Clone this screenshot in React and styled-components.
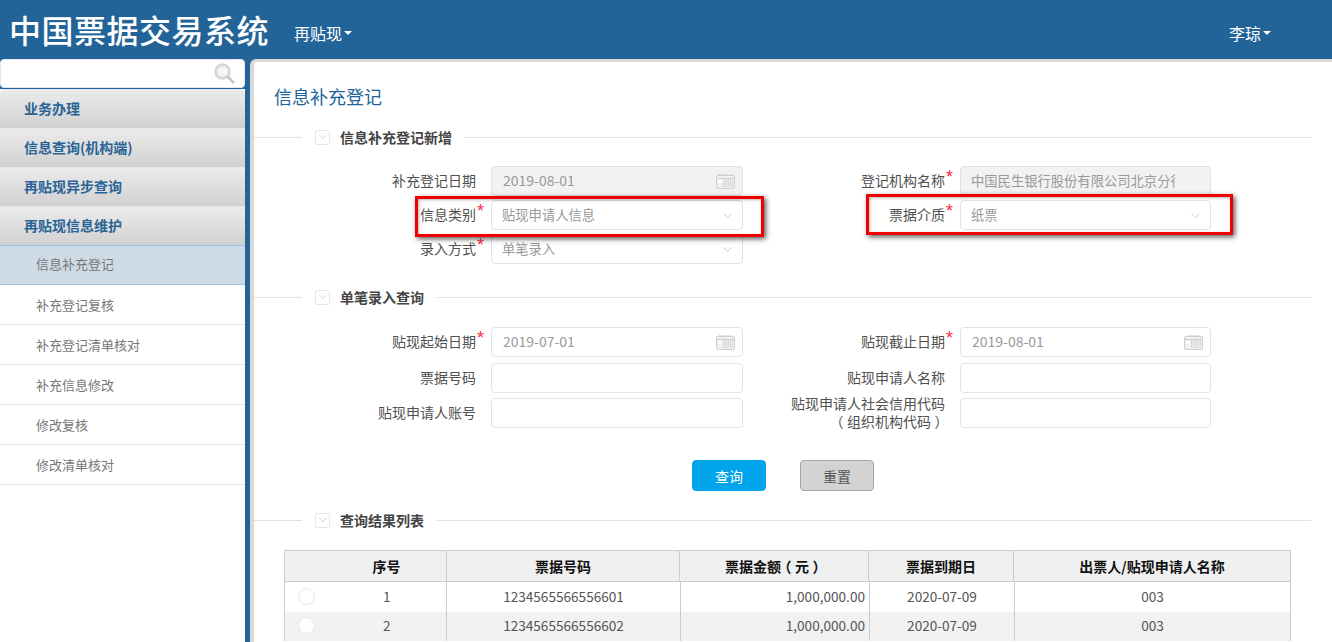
import React from "react";
import styled, { createGlobalStyle } from "styled-components";
import { ChevronDown } from "lucide-react";

const GlobalStyle = createGlobalStyle`
  html, body {
    margin: 0;
    padding: 0;
    height: 100%;
    overflow: hidden;
    background: #ffffff;
  }
  * {
    box-sizing: border-box;
  }
  #root {
    height: 642px;
    font-family: "Noto Sans CJK SC", sans-serif;
  }
`;

const cjk = `"Noto Sans CJK SC", sans-serif`;

// Page frame
const Page = styled.div`
  height: 642px;
  overflow: hidden;
  background: #226498;
  display: flex;
  flex-direction: column;
`;

const Header = styled.header`
  height: 59px;
  flex: none;
  display: flex;
  align-items: center;
  padding: 0 61px 0 9px;
  color: #ffffff;
`;

const Title = styled.h1`
  margin: 0 25px 0 0;
  font-family: ${cjk};
  font-size: 32px;
  font-weight: 500;
  letter-spacing: 0.5px;
  line-height: 59px;
`;

const NavMenu = styled.div`
  font-family: ${cjk};
  font-size: 16px;
  display: flex;
  align-items: center;
  margin: ${(p) => (p.$right ? "0 0 0 auto" : "0")};
  padding-top: 6px;
`;

const Caret = styled.span`
  width: 0;
  height: 0;
  margin-left: 2px;
  border-left: 4px solid transparent;
  border-right: 4px solid transparent;
  border-top: 4px solid #ffffff;
`;

const Body = styled.div`
  flex: 1;
  min-height: 0;
  display: flex;
`;

// Sidebar
const Sidebar = styled.aside`
  width: 245px;
  flex: none;
  margin-right: 5px;
  background: #ffffff;
  display: flex;
  flex-direction: column;
`;

const SearchBox = styled.div`
  height: 30px;
  background: #226498;
  flex: none;
`;

const SearchInner = styled.div`
  height: 29px;
  background: #ffffff;
  border: 1px solid #e3e8f0;
  border-radius: 4px;
  display: flex;
  align-items: center;
  justify-content: flex-end;
  padding-right: 9px;
`;

const GroupItem = styled.div`
  height: 39px;
  flex: none;
  display: flex;
  align-items: center;
  padding: 0 0 2px 24px;
  font-family: ${cjk};
  font-size: 14px;
  font-weight: 700;
  color: #2a6496;
  background: linear-gradient(#ebebeb, #d1d1d1);
  border-top: 1px solid #e3e8f0;
  border-radius: ${(p) => (p.$first ? "5px 5px 0 0" : "0")};
`;

const SubItem = styled.div`
  height: 40px;
  flex: none;
  display: flex;
  align-items: center;
  padding: 0 0 ${(p) => (p.$active ? "3px" : "0")} 36px;
  font-family: ${cjk};
  font-size: 13px;
  color: #777777;
  background: ${(p) => (p.$active ? "#cddbe7" : "#ffffff")};
  border-bottom: 1px solid ${(p) => (p.$active ? "#a3c0dd" : "#e0e7f0")};
  border-top: ${(p) => (p.$active ? "1px solid #a3c0dd" : "0")};
`;

// Content panel
const Content = styled.main`
  flex: 1;
  position: relative;
  background: #ffffff;
  border-left: 4px solid #d8d8d8;
  border-top: 3px solid #d8d8d8;
  border-top-left-radius: 6px;
  padding-right: 21px;
  min-width: 0;
`;

const PageTitle = styled.h2`
  margin: 0;
  padding: 21px 0 0 20px;
  height: 64px;
  font-family: ${cjk};
  font-size: 18px;
  font-weight: 400;
  line-height: 26px;
  color: #226498;
`;

const Legend = styled.div`
  height: 22px;
  margin-top: ${(p) => p.$top || 0}px;
  display: flex;
  align-items: center;
  font-family: ${cjk};
  font-size: 14px;
  font-weight: 700;
  color: #444444;
  &::before {
    content: "";
    width: 48px;
    height: 1px;
    background: #dde3ea;
    margin-right: 13px;
  }
  &::after {
    content: "";
    flex: 1;
    height: 1px;
    background: #dde3ea;
    margin-left: 12px;
  }
`;

const FoldBox = styled.span`
  width: 15px;
  height: 15px;
  margin-right: 10px;
  border: 1px solid #e3e8f0;
  border-radius: 2px;
  display: flex;
  align-items: center;
  justify-content: center;
  color: #bcc4ce;
`;

const FormGrid = styled.div`
  display: grid;
  grid-template-columns: 237px 252px 217px 251px;
  grid-auto-rows: 30px;
  row-gap: ${(p) => p.$gap}px;
  margin-top: ${(p) => p.$top}px;
`;

const FieldLabel = styled.label`
  position: relative;
  display: flex;
  align-items: center;
  justify-content: flex-end;
  padding: 0 15px 2px 0;
  font-family: ${cjk};
  font-size: 14px;
  line-height: 18px;
  color: #505050;
  text-align: right;
`;

const Required = styled.span`
  position: absolute;
  right: 7px;
  top: 2px;
  font-family: "Liberation Sans", sans-serif;
  font-size: 18px;
  line-height: 18px;
  color: #ff2a3c;
`;

// Fullwidth brackets sit centred in their cell in the reference
const Paren = styled.span`
  font-feature-settings: "halt";
  padding: 0 3.5px;
`;

const Control = styled.div`
  height: 30px;
  display: flex;
  align-items: center;
  justify-content: space-between;
  padding: 0 7px 0 11px;
  border: 1px solid #dde3ea;
  border-radius: 4px;
  background: ${(p) => (p.$disabled ? "#f2f2f2" : "#ffffff")};
  color: #999999;
  overflow: hidden;
  white-space: nowrap;
`;

const ControlText = styled.span`
  font-family: ${cjk};
  font-size: ${(p) => (p.$date ? "14px" : "13.3px")};
  margin: ${(p) => (p.$date ? "0 0 2px" : "0 0 2px -1px")};
  overflow: hidden;
  max-width: ${(p) => (p.$clip ? "204px" : "none")};
`;

const Actions = styled.div`
  display: flex;
  margin: 32px 0 0 438px;
  gap: 34px;
`;

const Button = styled.button`
  width: 74px;
  height: 31px;
  padding: 0;
  border-radius: 4px;
  font-family: ${cjk};
  font-size: 14px;
  cursor: pointer;
  color: ${(p) => (p.$primary ? "#ffffff" : "#555555")};
  background: ${(p) => (p.$primary ? "#00a4ea" : "#d3d3d3")};
  border: 1px solid ${(p) => (p.$primary ? "#00a4ea" : "#a5a5a5")};
`;

const TableWrap = styled.div`
  margin: 19px 0 0 30px;
  width: 1006px;
`;

const GridTable = styled.table`
  width: 100%;
  table-layout: fixed;
  border-collapse: collapse;
  font-size: 13.6px;
`;

const HeadCell = styled.th`
  height: 31px;
  padding: ${(p) => (p.$seq ? "0 0 0 42px" : "0")};
  background: #f0f0f0;
  border: 1px solid #cccccc;
  font-family: ${cjk};
  font-size: 14px;
  font-weight: 700;
  color: #111111;
  text-align: center;
`;

const Cell = styled.td`
  height: 29.5px;
  padding: ${(p) => (p.$right ? "0 4px 1px 0" : "0 0 1px")};
  border-left: 1px solid #cccccc;
  border-right: 1px solid #cccccc;
  text-align: ${(p) => (p.$right ? "right" : "center")};
  color: #555555;
`;

const BodyRow = styled.tr`
  background: ${(p) => (p.$alt ? "#f2f2f2" : "#ffffff")};
  ${(p) => p.$alt && "& > td { padding-bottom: 2px; }"}
`;

const SeqCell = styled.div`
  display: flex;
  align-items: center;
  padding-left: 13px;
`;

const Radio = styled.span`
  width: 17px;
  height: 17px;
  flex: none;
  border-radius: 50%;
  background: #ffffff;
  border: 1px solid #e3e8f0;
`;

const SeqNum = styled.span`
  flex: 1;
  margin-left: 68px;
  margin-right: 56px;
  text-align: center;
`;

const Highlight = styled.div`
  position: absolute;
  left: ${(p) => p.$left}px;
  top: ${(p) => p.$top}px;
  width: ${(p) => p.$width}px;
  height: 41px;
  border: 3px solid #f00000;
  box-shadow: 2px 2px 5px rgba(0, 0, 0, 0.65), inset 1px 1px 3px rgba(0, 0, 0, 0.3);
  pointer-events: none;
`;

const SearchIcon = () => (
  <svg width="21" height="21" viewBox="0 0 21 21" fill="none">
    <circle cx="8.5" cy="8.5" r="7" stroke="#d4d4d4" strokeWidth="2.4" fill="#f7f7f7" />
    <circle cx="8.5" cy="8.5" r="4.6" stroke="#e8e8e8" />
    <path d="M14 14l5.2 5.2" stroke="#c8c8c8" strokeWidth="3" strokeLinecap="round" />
  </svg>
);

const CalendarIcon = () => (
  <svg width="19" height="15" viewBox="0 0 19 15" fill="none">
    <rect x="0.5" y="1.5" width="18" height="13" rx="1.5" fill="#f0f0f0" stroke="#d0d0d0" />
    <path d="M1 4.5h17" stroke="#cfcfcf" />
    <path d="M3 0.5h13" stroke="#cfcfcf" strokeDasharray="1 1" />
    <rect x="2.5" y="6" width="3" height="3" fill="#fff" />
    <path d="M7 6h10M7 8h10M7 10h10M7 12h10" stroke="#c8c8c8" strokeDasharray="1.4 0.8" />
  </svg>
);

const Fold = () => (
  <FoldBox>
    <ChevronDown size={12} strokeWidth={1.5} />
  </FoldBox>
);

const Field = ({ label, required, children }) => (
  <FieldLabel>
    {children || label}
    {required && <Required>*</Required>}
  </FieldLabel>
);

const DateControl = ({ value, disabled }) => (
  <Control $disabled={disabled}>
    <ControlText $date>{value}</ControlText>
    <CalendarIcon />
  </Control>
);

const SelectControl = ({ value }) => (
  <Control>
    <ControlText>{value}</ControlText>
    <ChevronDown size={15} color="#c4c8cc" strokeWidth={1.5} />
  </Control>
);

const groups = ["业务办理", "信息查询(机构端)", "再贴现异步查询", "再贴现信息维护"];
const subItems = ["信息补充登记", "补充登记复核", "补充登记清单核对", "补充信息修改", "修改复核", "修改清单核对"];

const headCols = [162, 233, 189, 145, 277];
const bodyCols = [162, 234, 189, 145, 276];

const rows = [
  { seq: 1, no: "1234565566556601", amount: "1,000,000.00", due: "2020-07-09", name: "003" },
  { seq: 2, no: "1234565566556602", amount: "1,000,000.00", due: "2020-07-09", name: "003" },
];

const App = () => {
  return (
    <Page>
      <GlobalStyle />
      <Header>
        <Title>中国票据交易系统</Title>
        <NavMenu>
          再贴现
          <Caret />
        </NavMenu>
        <NavMenu $right>
          李琼
          <Caret />
        </NavMenu>
      </Header>
      <Body>
        <Sidebar>
          <SearchBox>
            <SearchInner>
              <SearchIcon />
            </SearchInner>
          </SearchBox>
          {groups.map((g, i) => (
            <GroupItem key={g} $first={i === 0}>
              {g}
            </GroupItem>
          ))}
          {subItems.map((s, i) => (
            <SubItem key={s} $active={i === 0}>
              {s}
            </SubItem>
          ))}
        </Sidebar>
        <Content>
          <PageTitle>信息补充登记</PageTitle>
          <Legend>
            <Fold />
            信息补充登记新增
          </Legend>
          <FormGrid $gap={4} $top={18}>
            <Field label="补充登记日期" />
            <DateControl value="2019-08-01" disabled />
            <Field label="登记机构名称" required />
            <Control $disabled>
              <ControlText $clip>中国民生银行股份有限公司北京分行</ControlText>
            </Control>
            <Field label="信息类别" required />
            <SelectControl value="贴现申请人信息" />
            <Field label="票据介质" required />
            <SelectControl value="纸票" />
            <Field label="录入方式" required />
            <SelectControl value="单笔录入" />
          </FormGrid>
          <Legend $top={22}>
            <Fold />
            单笔录入查询
          </Legend>
          <FormGrid $gap={5.5} $top={19}>
            <Field label="贴现起始日期" required />
            <DateControl value="2019-07-01" />
            <Field label="贴现截止日期" required />
            <DateControl value="2019-08-01" />
            <Field label="票据号码" />
            <Control />
            <Field label="贴现申请人名称" />
            <Control />
            <Field label="贴现申请人账号" />
            <Control />
            <Field>
              <span>
                贴现申请人社会信用代码
                <br />
                <Paren>（</Paren>组织机构代码<Paren>）</Paren>
              </span>
            </Field>
            <Control />
          </FormGrid>
          <Actions>
            <Button $primary>查询</Button>
            <Button>重置</Button>
          </Actions>
          <Legend $top={18}>
            <Fold />
            查询结果列表
          </Legend>
          <TableWrap>
            <GridTable>
              <colgroup>
                {headCols.map((w, i) => (
                  <col key={i} style={{ width: w }} />
                ))}
              </colgroup>
              <thead>
                <tr>
                  <HeadCell $seq>序号</HeadCell>
                  <HeadCell>票据号码</HeadCell>
                  <HeadCell>
                    票据金额<Paren>（</Paren>元<Paren>）</Paren>
                  </HeadCell>
                  <HeadCell>票据到期日</HeadCell>
                  <HeadCell>出票人/贴现申请人名称</HeadCell>
                </tr>
              </thead>
            </GridTable>
            <GridTable>
              <colgroup>
                {bodyCols.map((w, i) => (
                  <col key={i} style={{ width: w }} />
                ))}
              </colgroup>
              <tbody>
                {rows.map((r) => (
                  <BodyRow key={r.seq} $alt={r.seq % 2 === 0}>
                    <Cell>
                      <SeqCell>
                        <Radio />
                        <SeqNum>{r.seq}</SeqNum>
                      </SeqCell>
                    </Cell>
                    <Cell>{r.no}</Cell>
                    <Cell $right>{r.amount}</Cell>
                    <Cell>{r.due}</Cell>
                    <Cell>{r.name}</Cell>
                  </BodyRow>
                ))}
              </tbody>
            </GridTable>
          </TableWrap>
          <Highlight $left={161} $top={134} $width={349} />
          <Highlight $left={612} $top={132} $width={367} />
        </Content>
      </Body>
    </Page>
  );
};

export default App;
